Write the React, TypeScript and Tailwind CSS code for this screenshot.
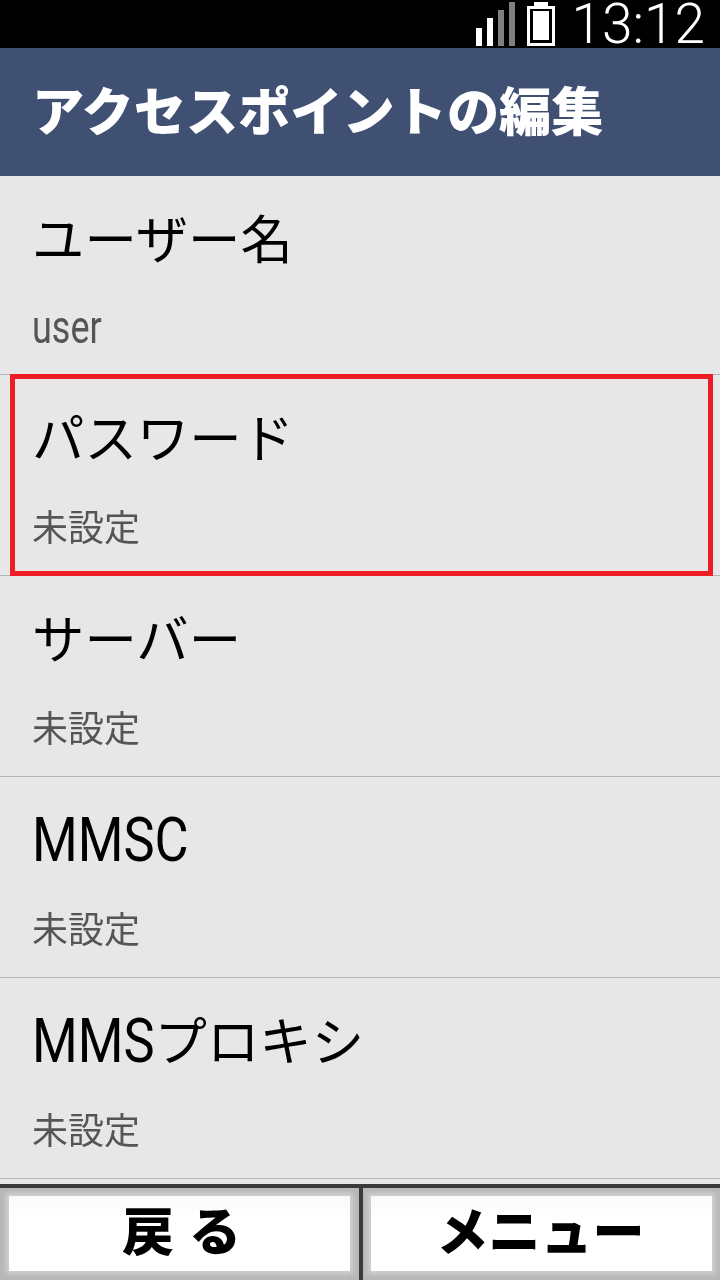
import React from 'react';

const font = { jp: "font-['Roboto','Noto_Sans_CJK_JP',sans-serif]" };

// latin glyphs on the device are tall and narrow
function Tall({ children, big }: { children: string; big?: boolean }) {
  return (
    <span className={big ? 'inline-block origin-[0_80%] scale-y-[1.16] translate-y-[2px]' : 'inline-block origin-[0_80%] scale-y-[1.3] translate-y-[2px]'}>
      {children}
    </span>
  );
}

const rows = [
  { label: <>ユーザー名</>, value: <Tall>user</Tall> },
  { label: <>パスワード</>, value: <>未設定</>, selected: true },
  { label: <>サーバー</>, value: <>未設定</> },
  { label: <Tall big>MMSC</Tall>, value: <>未設定</> },
  { label: <><Tall big>MMS</Tall>プロキシ</>, value: <>未設定</> },
];

function Row({ label, value, selected }: { label: React.ReactNode; value: React.ReactNode; selected?: boolean }) {
  return (
    <div className="relative h-[201px] border-b border-[#b4b4b4] pl-[32px] first:h-[199px]">
      <div className="pt-[29px] h-[129px] text-[52.4px] leading-[72px] text-black">{label}</div>
      <div className="text-[36px] leading-[50px] text-[#555555] [will-change:transform]">{value}</div>
      {selected && (
        <div className="absolute left-[10px] right-[7px] top-[-1px] bottom-[-1px] border-[5px] border-[#ee1c25]"></div>
      )}
    </div>
  );
}

function FootButton({ label, className, shift }: { label: string; className: string; shift?: boolean }) {
  return (
    <div className={`flex-1 h-full bg-[#b7b7b7] pt-[8px] pb-[9px] ${className}`}>
      <div className="h-full bg-gradient-to-b from-[#f9f9f9] to-white to-30% flex items-center justify-center text-[52px] font-black [word-spacing:2px] text-black shadow-[0_0_5px_3px_#d2d2d2]">
        <span className={shift ? 'translate-x-[2px]' : '-translate-x-[1px]'}>{label}</span>
      </div>
    </div>
  );
}

export default function App() {
  return (
    <div className={`w-[720px] h-[1280px] overflow-hidden flex flex-col bg-[#e7e7e7] ${font.jp}`}>
      {/* status bar */}
      <div className="h-[48px] bg-black flex items-center justify-end pr-[15px]">
        <svg width="80" height="48" viewBox="0 0 80 48" className="mr-[15px]">
          <rect x="0" y="28" width="6" height="18" fill="#fff" />
          <rect x="11" y="18" width="6" height="28" fill="#fff" />
          <rect x="22" y="10" width="6" height="36" fill="#808080" />
          <rect x="33" y="2" width="6" height="44" fill="#808080" />
          <rect x="52.5" y="7.5" width="25" height="37" fill="none" stroke="#fff" strokeWidth="3" />
          <rect x="58" y="2" width="14" height="5" fill="#fff" />
          <rect x="57" y="11" width="16" height="29" fill="#fff" />
        </svg>
        <div className="text-[55px] leading-[48px] font-light text-white">13:12</div>
      </div>

      {/* title */}
      <div className="h-[128px] bg-[#3f5073] flex items-center pl-[32px] pt-[3px] text-[52.2px] leading-[72px] font-black text-white">
        アクセスポイントの編集
      </div>

      {/* list */}
      <div className="flex-1 min-h-0">
        {rows.map((r, i) => (
          <Row key={i} {...r} />
        ))}
      </div>

      {/* bottom buttons */}
      <div className="h-[96px] flex border-t-[4px] border-[#3a3a3a]">
        <FootButton label="戻 る" className="px-[9px]" shift />
        <div className="w-[4px] bg-[#3a3a3a]"></div>
        <FootButton label="メニュー" className="px-[8px]" />
      </div>
    </div>
  );
}
